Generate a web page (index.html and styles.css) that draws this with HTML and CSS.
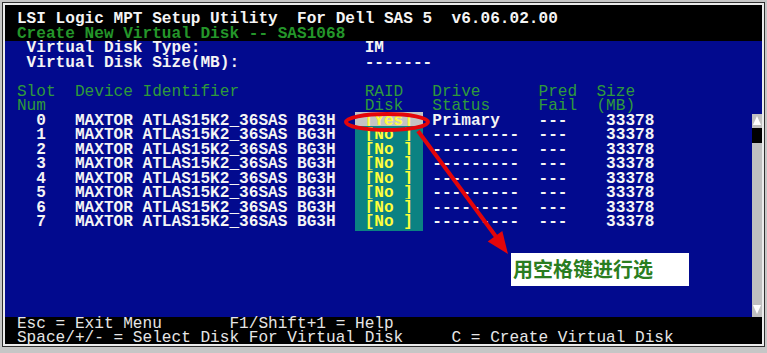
FILE: index.html
```html
<!DOCTYPE html>
<html lang="en">
<head>
    <meta charset="UTF-8">
    <meta name="viewport" content="width=device-width, initial-scale=1.0">
    <title>LSI Logic MPT Setup Utility</title>
    <link rel="stylesheet" href="styles.css">
</head>
<body>
    <div class="frame">
        <div class="display">
            <div class="top">
                <div class="line title"> LSI Logic MPT Setup Utility  For Dell SAS 5  v6.06.02.00</div>
                <div class="line subtitle"> Create New Virtual Disk -- SAS1068</div>
            </div>

            <div class="main">
                <div class="text">
                    <div class="line">  Virtual Disk Type:                 IM</div>
                    <div class="line">  Virtual Disk Size(MB):             -------</div>
                    <div class="line"> </div>
                    <div class="line hd"> Slot  Device Identifier             RAID   Drive      Pred  Size</div>
                    <div class="line hd"> Num                                 Disk   Status     Fail  (MB)</div>
                    <div class="line">   0   MAXTOR ATLAS15K2_36SAS BG3H  <span class="cell selected"> [Yes] </span> Primary    ---    33378</div>
                    <div class="line">   1   MAXTOR ATLAS15K2_36SAS BG3H  <span class="cell"> [No ] </span> ---------  ---    33378</div>
                    <div class="line">   2   MAXTOR ATLAS15K2_36SAS BG3H  <span class="cell"> [No ] </span> ---------  ---    33378</div>
                    <div class="line">   3   MAXTOR ATLAS15K2_36SAS BG3H  <span class="cell"> [No ] </span> ---------  ---    33378</div>
                    <div class="line">   4   MAXTOR ATLAS15K2_36SAS BG3H  <span class="cell"> [No ] </span> ---------  ---    33378</div>
                    <div class="line">   5   MAXTOR ATLAS15K2_36SAS BG3H  <span class="cell"> [No ] </span> ---------  ---    33378</div>
                    <div class="line">   6   MAXTOR ATLAS15K2_36SAS BG3H  <span class="cell"> [No ] </span> ---------  ---    33378</div>
                    <div class="line">   7   MAXTOR ATLAS15K2_36SAS BG3H  <span class="cell"> [No ] </span> ---------  ---    33378</div>
                </div>
                <div class="scroll">
                    <div class="arrow"><span class="tri up"></span></div>
                    <div class="thumb"></div>
                    <div class="track"></div>
                    <div class="arrow"><span class="tri down"></span></div>
                </div>
            </div>

            <div class="footer">
                <div class="line"> Esc = Exit Menu       F1/Shift+1 = Help</div>
                <div class="line"> Space/+/- = Select Disk For Virtual Disk     C = Create Virtual Disk</div>
            </div>
        </div>
    </div>

    <!-- annotation drawn over the screenshot -->
    <svg class="marks" width="767" height="353" viewBox="0 0 767 353">
        <ellipse cx="387" cy="122" rx="41" ry="8" fill="none" stroke="#e4050a" stroke-width="4"/>
        <line x1="418" y1="131" x2="497" y2="238" stroke="#e4050a" stroke-width="4"/>
        <polygon points="508,254 487.7,241.5 502.3,230.9" fill="#e4050a"/>
    </svg>
    <div class="label">用空格键进行选</div>
</body>
</html>
```

FILE: styles.css
```css
body {
    margin: 0;
    width: 767px;
    height: 353px;
    background-color: #c6c6c6;
    font-family: "Liberation Mono", "DejaVu Sans Mono", monospace;
    position: relative;
    overflow: hidden;
}

.frame {
    margin: 2px;
    border: 1px solid #303030;
}

.display {
    border: 2px solid #ececec;
    background-color: #000;
    height: 343px;
    box-sizing: border-box;
}

.line {
    white-space: pre;
    font-size: 16.1px;
    line-height: 14.5px;
    height: 14.5px;
    font-weight: bold;
    color: #f4f4f4;
}

.top {
    padding: 7px 0 0 2.3px;
}

.subtitle {
    color: #24962a;
}

.main {
    display: flex;
    background-color: #020a8e;
}

.text {
    flex: 1;
    padding-left: 2.3px;
}

.hd {
    color: #2f9a3a;
    font-weight: normal;
}

.cell {
    background-color: #0b8282;
    color: #ffff3c;
}

.cell.selected {
    background-color: #c4c4c4;
}

.scroll {
    width: 10px;
    margin-top: 72.5px;
    height: 203px;
    display: flex;
    flex-direction: column;
    background-color: #c0c0c0;
}

.arrow {
    height: 14.5px;
    display: flex;
    align-items: center;
    justify-content: center;
}

.tri {
    width: 0;
    height: 0;
    border-left: 4px solid transparent;
    border-right: 4px solid transparent;
}

.tri.up {
    border-bottom: 9px solid #fff;
}

.tri.down {
    border-top: 9px solid #fff;
}

.thumb {
    height: 14.5px;
    background-color: #000;
}

.track {
    flex: 1;
}

.footer {
    padding-left: 2.3px;
}

.footer .line {
    font-weight: normal;
    color: #e6e6e6;
}

.marks {
    position: absolute;
    top: 0;
    left: 0;
}

.label {
    position: absolute;
    left: 511px;
    top: 253px;
    width: 178px;
    height: 33px;
    box-sizing: border-box;
    padding: 3px 0 0 2px;
    background-color: #fff;
    color: #2a7d20;
    font-family: "Noto Sans CJK SC", sans-serif;
    font-size: 20px;
    line-height: 26px;
    font-weight: bold;
}
```
